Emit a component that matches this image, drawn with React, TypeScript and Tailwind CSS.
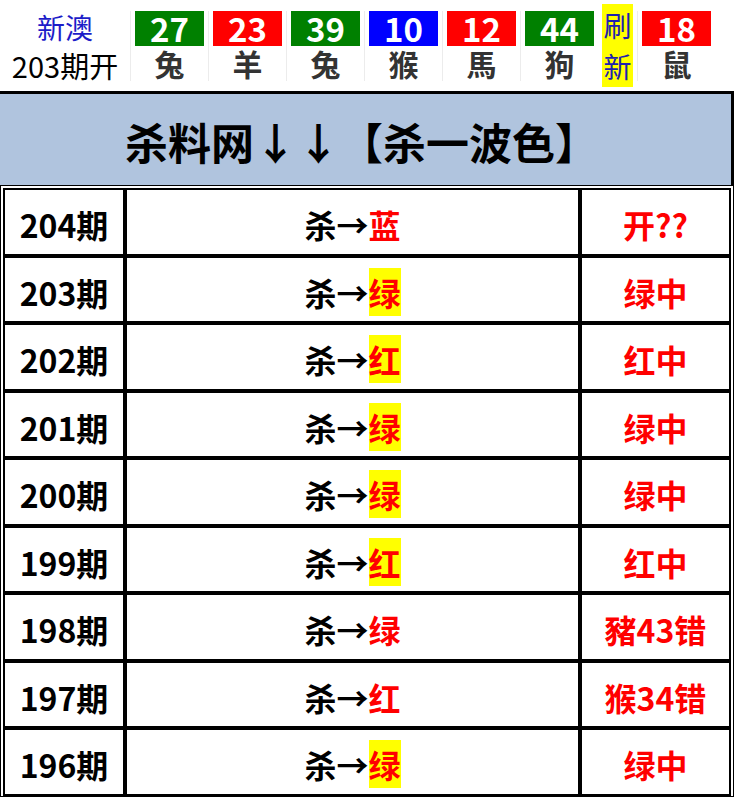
const balls = [
  { n: '27', a: '兔', c: 'bg-[#008000]' },
  { n: '23', a: '羊', c: 'bg-[#ff0000]' },
  { n: '39', a: '兔', c: 'bg-[#008000]' },
  { n: '10', a: '猴', c: 'bg-[#0000ff]' },
  { n: '12', a: '馬', c: 'bg-[#ff0000]' },
  { n: '44', a: '狗', c: 'bg-[#008000]' },
];

const rows = [
  { p: '204期', k: '蓝', hl: false, r: '开??' },
  { p: '203期', k: '绿', hl: true, r: '绿中' },
  { p: '202期', k: '红', hl: true, r: '红中' },
  { p: '201期', k: '绿', hl: true, r: '绿中' },
  { p: '200期', k: '绿', hl: true, r: '绿中' },
  { p: '199期', k: '红', hl: true, r: '红中' },
  { p: '198期', k: '绿', hl: false, r: '豬43错' },
  { p: '197期', k: '红', hl: false, r: '猴34错' },
  { p: '196期', k: '绿', hl: true, r: '绿中' },
];

function Ball({ n, a, c }: { n: string; a: string; c: string }) {
  return (
    <div className="w-[78px] px-[4px] border-l border-[#ececec]">
      <div className={`${c} h-[35px] flex items-center justify-center text-white font-bold text-[33px] leading-[35px]`}>
        {n}
      </div>
      <div className="h-[35px] flex items-center justify-center text-[#333] font-bold text-[30px] leading-[35px]">
        {a}
      </div>
    </div>
  );
}

export default function App() {
  return (
    <div className="w-[734px] bg-white" style={{ fontFamily: '"Noto Sans CJK SC", "Liberation Sans", sans-serif' }}>
      <div className="h-[91px] flex items-center">
        <div className="w-[130px] flex flex-col items-center">
          <div className="text-[#1c1cc8] text-[28px] leading-[38px]">新澳</div>
          <div className="text-black text-[29px] leading-[38px]">203期开</div>
        </div>
        {balls.map((b, i) => (
          <Ball key={i} {...b} />
        ))}
        <div className="w-[39px] px-[4px] self-stretch py-[4px]">
          <div className="h-full bg-[#ffff00] flex flex-col items-center justify-center text-[#2020b0] text-[28px] leading-[41px]">
            <span>刷</span>
            <span>新</span>
          </div>
        </div>
        <Ball n="18" a="鼠" c="bg-[#ff0000]" />
      </div>

      <div className="h-[94px] bg-[#b0c4de] border-t-[3px] border-r-[3px] border-black flex items-center justify-center pr-[8px] pt-[4px]">
        <span className="text-[43px] font-bold text-black">杀料网↓↓【杀一波色】</span>
      </div>

      <div className="border border-black px-[2px] pt-[2px]">
        <div className="grid grid-cols-[122px_455px_1fr]">
          {rows.map((row) => (
            <div key={row.p} className="contents">
              <div className="h-[67.5px] pt-[5px] border-2 border-black flex items-center justify-center text-[32px] font-bold text-black">
                {row.p}
              </div>
              <div className="h-[67.5px] pt-[5px] border-2 border-black flex items-center justify-center text-[32px] font-bold text-black">
                <span>杀→</span>
                <span className={`text-[#ff0000] ${row.hl ? 'bg-[#ffff00]' : ''}`}>{row.k}</span>
              </div>
              <div className="h-[67.5px] pt-[5px] border-2 border-black flex items-center justify-center text-[32px] font-bold text-[#ff0000]">
                {row.r}
              </div>
            </div>
          ))}
        </div>
      </div>
    </div>
  );
}
